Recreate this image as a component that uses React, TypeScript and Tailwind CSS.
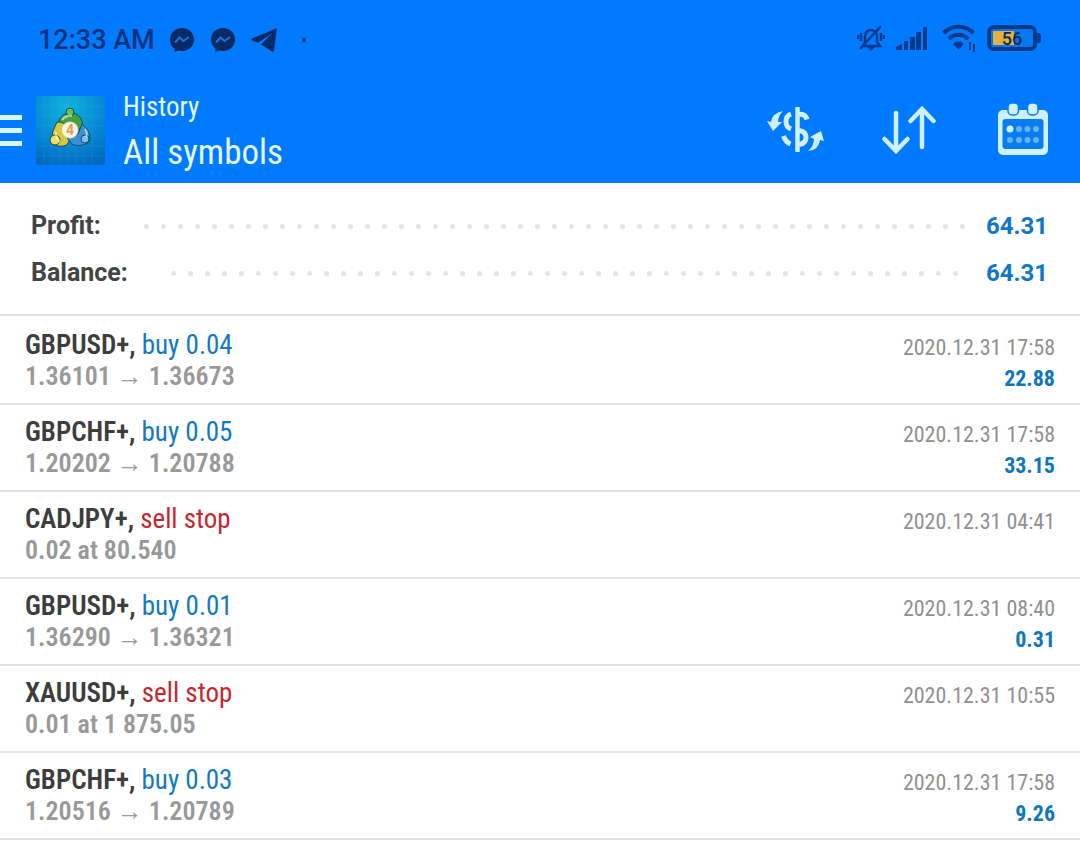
import React from "react";

const trades = [
  { symbol: "GBPUSD+", side: "buy 0.04", open: "1.36101", close: "1.36673", date: "2020.12.31 17:58", profit: "22.88" },
  { symbol: "GBPCHF+", side: "buy 0.05", open: "1.20202", close: "1.20788", date: "2020.12.31 17:58", profit: "33.15" },
  { symbol: "CADJPY+", side: "sell stop", note: "0.02 at 80.540", date: "2020.12.31 04:41" },
  { symbol: "GBPUSD+", side: "buy 0.01", open: "1.36290", close: "1.36321", date: "2020.12.31 08:40", profit: "0.31" },
  { symbol: "XAUUSD+", side: "sell stop", note: "0.01 at 1 875.05", date: "2020.12.31 10:55" },
  { symbol: "GBPCHF+", side: "buy 0.03", open: "1.20516", close: "1.20789", date: "2020.12.31 17:58", profit: "9.26" },
];

function MessengerIcon() {
  return (
    <svg width="26" height="26" viewBox="0 0 26 26">
      <path
        d="M13 1C6 1 1 6 1 12.500c0 4 1.600 7 4.500 9V25l4-1.500c1 .3 2.300.5 3.500.5 7 0 12-5 12-11.500S20 1 13 1Z"
        fill="#0a2a66"
      />
      <path d="m6 15.500 4.500-5 4 3.500 5.500-4" fill="none" stroke="#1b74dc" strokeWidth="2" />
    </svg>
  );
}

function StatusBar() {
  return (
    <div className="flex h-20 items-center justify-between pr-[38px] pl-[38px] text-[#083a8c]">
      <div className="flex items-center">
        <span className="text-[27px] leading-8 font-medium text-[#06317d]">12:33 AM</span>
        <span className="ml-3.5 flex items-center gap-[15px]">
          <MessengerIcon />
          <MessengerIcon />
        </span>
        <svg className="ml-[14px]" width="28" height="26" viewBox="0 0 28 26">
          <path d="M27 1 2 11.500c-1 .5-1 1.500 0 2l6 2.500L22 6 11 17.500l11 7c1 .5 2 0 2-1Z" fill="#0a2a66" />
        </svg>
        <span className="ml-6 h-1 w-1 rounded-full bg-[#0a2a66]" />
      </div>
      <div className="flex items-center pb-1">
        <svg width="28" height="28" viewBox="0 0 28 28" fill="none" stroke="currentColor" strokeWidth="2.500">
          <path d="M6 22h17l-3-4v-6a6 6 0 0 0-12 0v6Z" />
          <path d="M3 25 24 2M4 9v8M1 11v4M24 9v8M27 11v4" />
          <path d="M10 23h8l-4 4Z" fill="currentColor" stroke="none" />
        </svg>
        <svg className="ml-[11px]" width="32" height="24" viewBox="0 0 32 24" fill="currentColor">
          <path d="M0 24v-3l6-3v6ZM8 24v-9h4v9ZM14 24V11h5v13ZM20 24V6h5v18ZM27 24V1h4v23Z" />
        </svg>
        <svg className="ml-3.5" width="34" height="28" viewBox="0 0 34 28" fill="none" stroke="currentColor" strokeWidth="4">
          <path d="M1.500 9a21 21 0 0 1 30 0M7 15a13 13 0 0 1 19 0" />
          <path d="M11 20a7.500 7.500 0 0 1 11 0l-5.500 5.500Z" fill="currentColor" stroke="none" />
          <path d="M28 18v8M32 20v8" strokeWidth="2" />
        </svg>
        <svg className="ml-[11px]" width="55" height="26" viewBox="0 0 55 26">
          <rect x="2" y="2" width="46" height="22" rx="5" fill="#0877ee" stroke="#083a8c" strokeWidth="4" />
          <rect x="6" y="6" width="21" height="14" fill="#e3b341" />
          <path d="M50 8h2q2 0 2 5t-2 5h-2Z" fill="#083a8c" />
          <text x="25" y="20" textAnchor="middle" className="text-[18px] font-medium" fill="#0a2a55">
            56
          </text>
        </svg>
      </div>
    </div>
  );
}

function AppLogo() {
  return (
    <svg className="ml-3.5 shrink-0" width="69" height="69" viewBox="0 0 69 69">
      <defs>
        <radialGradient id="sky" cx="45%" cy="15%" r="90%">
          <stop offset="0" stopColor="#10b2dc" />
          <stop offset="0.6" stopColor="#0588d4" />
          <stop offset="1" stopColor="#0468bf" />
        </radialGradient>
      </defs>
      <rect width="69" height="69" rx="2" fill="url(#sky)" />
      <path
        d="M8 0v69M16 0v69M24 0v69M32 0v69M40 0v69M48 0v69M56 0v69M0 10h69M0 20h69M0 30h69M0 40h69M0 50h69M0 60h69"
        stroke="#5fd0ea"
        strokeOpacity="0.12"
      />
      <g stroke="#0b4d62" strokeWidth="1">
        <path d="M22 28q2-9 9-11h7q8 3 9 13l-6 5H25Z" fill="#46a13e" />
        <circle cx="34" cy="16" r="4" fill="#6cc04e" />
        <path d="M21 26q8-1 10 7l3 10-3 6q-8 3-14-1-3-6 0-13Z" fill="#d7c83c" />
        <circle cx="19" cy="44" r="5" fill="#f0dc5c" />
        <path d="M46 28q9 7 8 17-6 6-17 4l-6-7 11-4Z" fill="#3f8fd6" />
        <circle cx="49" cy="43" r="4" fill="#7cbcf0" />
      </g>
      <path d="M26 24q4-5 10-4M20 36q-1 5 4 10M49 33q3 4 1 8" fill="none" stroke="#fff" strokeOpacity="0.6" strokeWidth="2" />
      <circle cx="34" cy="34" r="8" fill="#fbf7e8" stroke="#e5dcc0" />
      <text x="34" y="39" textAnchor="middle" className="text-[14px] font-bold" fill="#e8a04c">
        4
      </text>
    </svg>
  );
}

function Toolbar() {
  return (
    <div className="flex items-center justify-between pt-[5px] pr-[31px] pb-2 text-[#cdf1ff]">
      <div className="flex items-center">
        <button aria-label="Menu" className="flex w-[22px] flex-col gap-2">
          <span className="h-[5px] w-full bg-[#d8f6ff]" />
          <span className="h-[5px] w-full bg-[#d8f6ff]" />
          <span className="h-[5px] w-full bg-[#d8f6ff]" />
        </button>
        <AppLogo />
        <div className="ml-[18px] font-['Roboto_Condensed',Roboto,sans-serif] text-[#e2f8ff]">
          <p className="text-[27px] leading-[45px]">History</p>
          <h1 className="text-[35px] leading-[45px]">All symbols</h1>
        </div>
      </div>
      <div className="flex items-center">
        <button aria-label="Symbol">
          <svg width="58" height="46" viewBox="0 0 58 46" fill="none" stroke="currentColor" strokeWidth="5">
            <path d="M30.500 0v45" strokeWidth="4.500" />
            <path d="M24 7q-5 2-5 7.500t5 7.500M32 7.500q6-1 8 5M32 23.500q7 1 7 7t-7 7M16.500 29q2 6 7 8" />
            <path
              d="M16 4Q5 6 4 15l-4-1 6 10 9-9h-4q0-6 5-11ZM43 30l11-6 3 10-4-1q-1 10-12 11 6-5 6-12Z"
              fill="currentColor"
              stroke="none"
            />
          </svg>
        </button>
        <button aria-label="Sort" className="ml-[57px]">
          <svg
            width="54"
            height="50"
            viewBox="0 0 54 50"
            fill="none"
            stroke="currentColor"
            strokeWidth="4.500"
            strokeLinecap="round"
          >
            <path d="M14 8v38M2.500 34 14 46l11.500-12M40 42V4M28.500 16 40 4l11.500 12" />
          </svg>
        </button>
        <button aria-label="Period" className="ml-[61px]">
          <svg width="52" height="54" viewBox="0 1 52 54">
            <rect x="1" y="8" width="50" height="45" rx="5" fill="currentColor" />
            <rect x="5.500" y="17" width="41" height="30" rx="3" fill="#0a7cf0" />
            <rect x="11" y="1" width="10.500" height="12" rx="4" fill="currentColor" stroke="#0a7cf0" strokeWidth="1.500" />
            <rect x="30.500" y="1" width="10.500" height="12" rx="4" fill="currentColor" stroke="#0a7cf0" strokeWidth="1.500" />
            <circle cx="13" cy="27" r="3.500" fill="currentColor" />
            <g fill="#62b4f8">
              <circle cx="22" cy="27" r="3" />
              <circle cx="30.500" cy="27" r="3" />
              <circle cx="39" cy="27" r="3" />
              <circle cx="13" cy="38" r="3" />
              <circle cx="22" cy="38" r="3" />
              <circle cx="30.500" cy="38" r="3" />
              <circle cx="39" cy="38" r="3" />
            </g>
          </svg>
        </button>
      </div>
    </div>
  );
}

function SummaryRow({ label, value }: { label: string; value: string }) {
  return (
    <div className="flex h-[47px] items-center pr-8 pl-[31px] font-bold">
      <dt className="text-[25px] text-[#444444]">{label}</dt>
      <dd className="flex flex-1 items-center text-[24px] text-[#0f76cb]">
        <span className="mt-0.5 mr-5 ml-[43px] flex h-[5px] flex-1 flex-wrap gap-x-3 gap-y-2 overflow-hidden">
          {Array.from({ length: 100 }, (_, i) => (
            <span key={i} className="h-[5px] w-[5px] rounded-full bg-[#e4e4e4]" />
          ))}
        </span>
        {value}
      </dd>
    </div>
  );
}

function TradeRow({ trade }: { trade: any }) {
  return (
    <li className="flex justify-between border-b-2 border-[#e2e2e2] pt-3 pr-[25px] pb-[9px] pl-[25px]">
      <div className="pb-0.5 text-[27px] leading-[31px]">
        <p>
          <span className="font-semibold text-[#3d3d3d]">{trade.symbol},</span>{" "}
          <span className={trade.side.startsWith("buy") ? "text-[#1479c2]" : "text-[#c4272f]"}>{trade.side}</span>
        </p>
        <p className="text-[26px] leading-[31px] font-semibold text-[#999999]">
          {trade.note || (
            <>
              {trade.open} <span className="font-normal">→</span> {trade.close}
            </>
          )}
        </p>
      </div>
      <div className="pt-0.5 text-right text-[22px] leading-[31px]">
        <p className="text-[#909090]">{trade.date}</p>
        <p className="font-bold text-[#0f76bd]">{trade.profit}</p>
      </div>
    </li>
  );
}

export default function App() {
  return (
    <div className="min-h-screen bg-white font-[Roboto,sans-serif]">
      <header className="bg-[#007aff]">
        <StatusBar />
        <Toolbar />
      </header>
      <dl className="border-b-2 border-[#e2e2e2] pt-[19px] pb-[18px]">
        <SummaryRow label="Profit:" value="64.31" />
        <SummaryRow label="Balance:" value="64.31" />
      </dl>
      <ul className="pt-0.5 font-['Roboto_Condensed',Roboto,sans-serif]">
        {trades.map((trade, i) => (
          <TradeRow key={i} trade={trade} />
        ))}
      </ul>
    </div>
  );
}
